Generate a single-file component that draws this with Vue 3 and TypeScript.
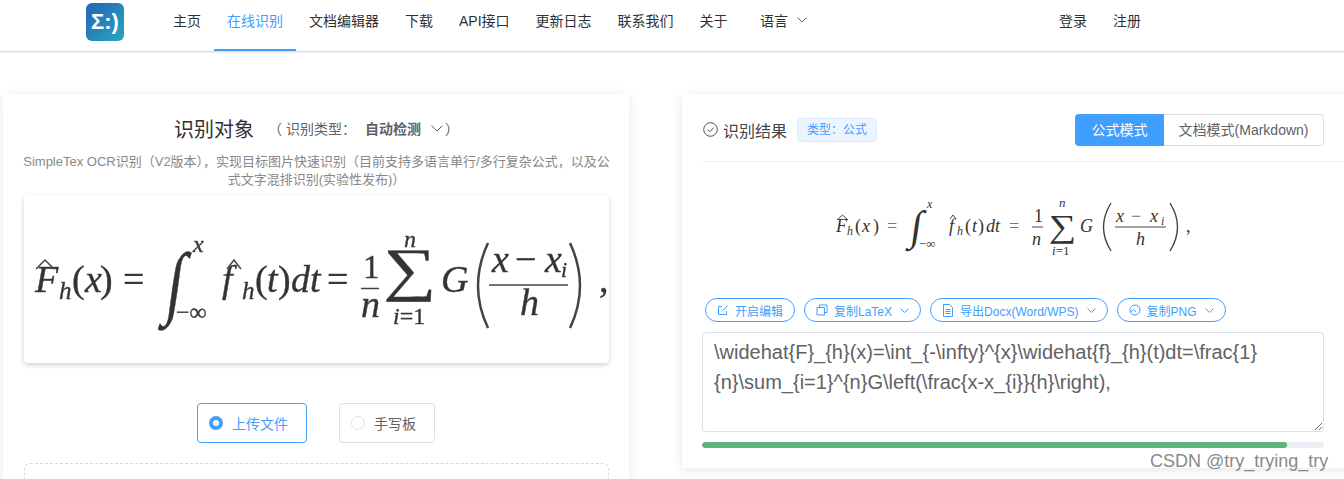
<script setup lang="ts">
const navItems = ['主页', '在线识别', '文档编辑器', '下载', 'API接口', '更新日志', '联系我们', '关于']
const latex = '\\widehat{F}_{h}(x)=\\int_{-\\infty}^{x}\\widehat{f}_{h}(t)dt=\\frac{1}{n}\\sum_{i=1}^{n}G\\left(\\frac{x-x_{i}}{h}\\right),'
</script>

<template>
  <div class="page">
    <header class="topbar">
      <div class="logo">Σ:)</div>
      <nav class="nav">
        <a v-for="(item, i) in navItems" :key="item" class="nav-item" :class="{ active: i === 1 }">{{ item }}</a>
        <a class="nav-item lang">
          语言
          <svg class="chev" width="10" height="6" viewBox="0 0 10 6"><path d="M.5.5 5 5 9.500.5" /></svg>
        </a>
      </nav>
      <div class="auth">
        <a>登录</a>
        <a>注册</a>
      </div>
    </header>

    <main class="columns">
      <section class="card left">
        <div class="title-row">
          <span class="title">识别对象</span>
          <span class="type">（ 识别类型：</span>
          <b class="type-value">自动检测</b>
          <svg class="chev type-chev" width="12" height="7" viewBox="0 0 12 7"><path d="M.5.5 6 6 11.500.5" /></svg>
          <span class="type">）</span>
        </div>
        <p class="desc">SimpleTex OCR识别（V2版本），实现目标图片快速识别（目前支持多语言单行/多行复杂公式，以及公式文字混排识别(实验性发布)）</p>

        <div class="source">
          <svg class="source-formula" width="585" height="168" viewBox="24 195 585 168">
            <g class="big">
              <text x="35" y="292">F</text>
              <text x="59" y="299" font-size="25">h</text>
              <text x="72" y="292" class="up">(</text>
              <text x="85" y="292">x</text>
              <text x="100" y="292" class="up">)</text>
              <text x="123" y="292" class="up">=</text>
              <text x="193" y="252" font-size="24">x</text>
              <text x="176" y="320" font-size="24" class="up">−∞</text>
              <text x="222" y="292">f</text>
              <text x="242" y="299" font-size="25">h</text>
              <text x="255" y="292" class="up">(</text>
              <text x="267" y="292">t</text>
              <text x="278" y="292" class="up">)</text>
              <text x="291" y="292">dt</text>
              <text x="327" y="292" class="up">=</text>
              <text x="363" y="278" class="up" font-size="33">1</text>
              <text x="361" y="317">n</text>
              <text x="404" y="247" font-size="24">n</text>
              <text x="393" y="324" font-size="24"><tspan>i</tspan><tspan class="up">=1</tspan></text>
              <text x="441" y="292">G</text>
              <text x="492" y="272">x</text>
              <text x="515" y="272" class="up">−</text>
              <text x="545" y="272">x</text>
              <text x="561" y="277" font-size="22">i</text>
              <text x="520" y="315">h</text>
              <text x="599" y="292" class="up">,</text>
              <text class="up" font-size="76" transform="translate(164 309) skewX(-8) scale(.8 1.06)">∫</text>
              <text class="up" font-size="62" transform="translate(383 289) scale(1.2 .95)">∑</text>
            </g>
            <g class="lines">
              <path d="M36 269 45 260 54 269M227 269 234 260 241 269" />
              <path d="M361 288.500H379M489 285H568" stroke-width="1.500" />
              <path d="M488 243Q468 286 488 328M570 243Q590 286 570 328" stroke-width="2.500" />
            </g>
          </svg>
        </div>

        <div class="modes">
          <label class="mode on"><i class="radio"></i>上传文件</label>
          <label class="mode"><i class="radio"></i>手写板</label>
        </div>
        <div class="dropzone"></div>
      </section>

      <section class="card right">
        <div class="result-head">
          <svg width="15" height="15" viewBox="0 0 15 15" class="ok"><circle cx="7.500" cy="7.500" r="6.800" /><path d="M4.500 7.500 6.800 9.800 10.800 5.500" /></svg>
          <span class="result-title">识别结果</span>
          <span class="tag">类型：公式</span>
          <div class="switch">
            <span class="switch-btn on">公式模式</span>
            <span class="switch-btn">文档模式(Markdown)</span>
          </div>
        </div>

        <div class="rendered">
          <svg width="380" height="70" viewBox="826 192 380 70">
            <g class="small">
              <text x="836" y="232">F</text>
              <text x="847" y="235" font-size="12">h</text>
              <text x="855" y="232" class="up">(</text>
              <text x="862" y="232">x</text>
              <text x="873" y="232" class="up">)</text>
              <text x="887" y="232" class="up soft">=</text>
              <text x="927" y="208" font-size="12">x</text>
              <text x="919" y="248" font-size="13" class="up">−∞</text>
              <text x="949" y="232">f</text>
              <text x="957" y="235" font-size="12">h</text>
              <text x="965" y="232" class="up">(</text>
              <text x="972" y="232">t</text>
              <text x="978" y="232" class="up">)</text>
              <text x="986" y="232">dt</text>
              <text x="1009" y="232" class="up soft">=</text>
              <text x="1034" y="222" class="up">1</text>
              <text x="1032" y="245">n</text>
              <text x="1059" y="207" font-size="13">n</text>
              <text x="1052" y="255" font-size="13"><tspan>i</tspan><tspan class="up">=1</tspan></text>
              <text x="1080" y="232">G</text>
              <text x="1116" y="222">x</text>
              <text x="1131" y="222" class="up soft">−</text>
              <text x="1150" y="222">x</text>
              <text x="1161" y="225" font-size="12">i</text>
              <text x="1136" y="245">h</text>
              <text x="1186" y="232" class="up">,</text>
              <text class="up" font-size="42" transform="translate(909 240) skewX(-8)">∫</text>
              <text class="up" font-size="32" transform="translate(1049 237) scale(1.2 1)">∑</text>
            </g>
            <g class="lines thin">
              <path d="M837 220 842.500 215 848 220M950 219 953 215 956 219" />
              <path d="M1032 227H1043M1115 227H1166" />
              <path d="M1111 203Q1096 227 1111 251M1170 203Q1185 227 1170 251" stroke-width="1.400" />
            </g>
          </svg>
        </div>

        <div class="actions">
          <button class="pill">
            <svg width="12" height="12" viewBox="0 0 12 12"><path d="M9.500 7v3.500h-8v-8H5M5 7.500 10.500 1.500" /></svg>
            开启编辑
          </button>
          <button class="pill">
            <svg width="12" height="12" viewBox="0 0 12 12"><path d="M3.500 3V1h7.500v7.500H8.500M1 3.500h7.500V11H1z" /></svg>
            复制LaTeX
            <svg class="chev" width="9" height="5" viewBox="0 0 9 5"><path d="M.5.500 4.500 4.500 8.500.5" /></svg>
          </button>
          <button class="pill">
            <svg width="12" height="13" viewBox="0 0 12 13"><path d="M1.500.5h6l3 3v9h-9zM3.500 5.500h5M3.500 7.500h5M3.500 9.500h5" /></svg>
            导出Docx(Word/WPS)
            <svg class="chev" width="9" height="5" viewBox="0 0 9 5"><path d="M.5.500 4.500 4.500 8.500.5" /></svg>
          </button>
          <button class="pill">
            <svg width="12" height="12" viewBox="0 0 12 12"><circle cx="6" cy="6" r="5" /><path d="M2 8 4.500 5.500 7 8M8 3.800h.5" /></svg>
            复制PNG
            <svg class="chev" width="9" height="5" viewBox="0 0 9 5"><path d="M.5.500 4.500 4.500 8.500.5" /></svg>
          </button>
        </div>

        <textarea class="latex" :value="latex" spellcheck="false"></textarea>

        <div class="progress"><div class="bar" :style="{ width: '94%' }"></div></div>
      </section>
    </main>

    <div class="watermark">CSDN @try_trying_try</div>
  </div>
</template>

<style>
html, body {
  margin: 0;
  overflow: hidden;
  background: #fff;
}
</style>

<style scoped>
.page {
  position: relative;
  height: 479px;
  overflow: hidden;
  font-family: "Liberation Sans", "Noto Sans CJK SC", sans-serif;
  color: #303133;
}

.topbar {
  display: flex;
  align-items: center;
  height: 51px;
  padding-left: 86px;
  border-bottom: 1px solid #dcdfe6;
  box-shadow: 0 1px 0 #f0f0f0;
}

.logo {
  width: 38px;
  height: 38px;
  margin-top: -7px;
  border-radius: 6px;
  background: linear-gradient(135deg, #2562b8, #2aa5bb);
  color: #fff;
  font-weight: 700;
  font-size: 22px;
  line-height: 38px;
  text-align: center;
}

.nav {
  display: flex;
  height: 100%;
  margin-left: 36px;
}

.nav-item {
  position: relative;
  display: flex;
  align-items: center;
  padding: 0 13px 11px;
  font-size: 14px;
  white-space: nowrap;
}

.nav-item.active {
  color: #409eff;
}

.nav-item.active::after {
  content: '';
  position: absolute;
  left: 0;
  right: 0;
  bottom: 0;
  height: 2px;
  background: #409eff;
}

.lang {
  margin-left: 6.500px;
  gap: 9px;
}

.chev {
  fill: none;
  stroke: #606266;
  stroke-width: 1;
}

.auth {
  display: flex;
  gap: 26px;
  margin-left: 239px;
  padding-bottom: 11px;
  font-size: 14px;
}

.columns {
  display: flex;
  align-items: flex-start;
  gap: 53px;
  padding: 42px 0 0 3px;
}

.card {
  background: #fff;
  box-shadow: 0 2px 12px rgba(0, 0, 0, 0.1);
  border-radius: 2px;
  box-sizing: border-box;
}

.left {
  flex: none;
  width: 626px;
  height: 420px;
  padding: 20px 20px 0 21px;
}

.title-row {
  display: flex;
  align-items: center;
  height: 28px;
  padding-left: 150px;
  font-size: 14px;
  color: #606266;
}

.title {
  font-size: 20px;
  margin-right: 14px;
  color: #303133;
}

.type-value {
  margin-left: 9px;
  margin-right: 10px;
}

.type-chev {
  margin-right: 2px;
}

.desc {
  margin: 11px -2px 0;
  font-size: 13px;
  line-height: 17.500px;
  color: #888;
  text-align: center;
}

.source {
  height: 168px;
  margin-top: 7px;
  background: #fff;
  border-radius: 4px;
  box-shadow: 0 2px 5px rgba(0, 0, 0, 0.18);
}

.source-formula {
  display: block;
  filter: blur(0.6px);
}

.big text,
.small text {
  font-family: "Liberation Serif", serif;
  font-style: italic;
  fill: #333;
}

.big text {
  stroke: #444;
  stroke-width: 0.4px;
}

.big {
  font-size: 38px;
}

.small {
  font-size: 18px;
}

.big .up,
.small .up,
.up {
  font-style: normal;
}

.small .soft {
  fill: #777;
}

.lines {
  fill: none;
  stroke: #444;
  stroke-width: 1.500;
}

.lines.thin {
  stroke-width: 1;
}

.modes {
  display: flex;
  justify-content: center;
  gap: 32px;
  margin-top: 40px;
  padding-right: 1px;
}

.mode {
  display: flex;
  align-items: center;
  gap: 9px;
  height: 40px;
  padding: 0 18px 0 11px;
  box-sizing: border-box;
  border: 1px solid #dcdfe6;
  border-radius: 4px;
  font-size: 14px;
  color: #606266;
}

.mode.on {
  border-color: #409eff;
  color: #409eff;
}

.radio {
  width: 14px;
  height: 14px;
  box-sizing: border-box;
  border: 1px solid #dcdfe6;
  border-radius: 50%;
}

.on .radio {
  border: 4.500px solid #409eff;
}

.dropzone {
  height: 80px;
  margin-top: 20px;
  border: 1px dashed #d9d9d9;
  border-radius: 6px;
}

.right {
  flex: none;
  width: 680px;
  height: 374px;
  padding: 20px 0 0 20px;
}

.result-head {
  display: flex;
  align-items: center;
  width: 642px;
  height: 48px;
  padding: 0 20px 16px 1px;
  border-bottom: 1px solid #ebeef5;
  box-sizing: border-box;
}

.ok {
  fill: none;
  stroke: #555;
  stroke-width: 1;
}

.result-title {
  margin-left: 5px;
  font-size: 16px;
  color: #444;
}

.tag {
  margin-left: 10px;
  padding: 0 9px;
  height: 24px;
  line-height: 22px;
  box-sizing: border-box;
  border: 1px solid #d9ecff;
  border-radius: 4px;
  background: #ecf5ff;
  color: #409eff;
  font-size: 12px;
}

.switch {
  display: flex;
  margin-left: auto;
  height: 32px;
  font-size: 14px;
}

.switch-btn {
  padding: 0 14.500px;
  line-height: 30px;
  border: 1px solid #dcdfe6;
  border-left: 0;
  border-radius: 0 4px 4px 0;
  color: #606266;
}

.switch-btn.on {
  padding: 0 16.500px;
  line-height: 32px;
  border: 0;
  border-radius: 4px 0 0 4px;
  background: #409eff;
  color: #fff;
}

.rendered {
  height: 70px;
  margin-top: 30px;
  padding-left: 124px;
}

.rendered svg {
  display: block;
}

.actions {
  display: flex;
  gap: 9px;
  margin-top: 36px;
  padding-left: 3px;
}

.pill {
  display: flex;
  align-items: center;
  gap: 6px;
  height: 24px;
  padding: 0 11px;
  background: #fff;
  border: 1px solid #409eff;
  border-radius: 12px;
  color: #409eff;
  font: 12px "Liberation Sans", "Noto Sans CJK SC", sans-serif;
  white-space: nowrap;
}

.pill svg {
  fill: none;
  stroke: #409eff;
  stroke-width: 1;
}

.pill .chev {
  margin-left: 2px;
}

.latex {
  display: block;
  width: 622px;
  height: 100px;
  margin-top: 10px;
  padding: 4px 11px;
  box-sizing: border-box;
  border: 1px solid #dcdfe6;
  border-radius: 4px;
  outline: none;
  font: 20px/30px "Liberation Sans", "Noto Sans CJK SC", sans-serif;
  color: #606266;
}

.progress {
  width: 622px;
  height: 6px;
  margin-top: 10px;
  border-radius: 3px;
  background: #ebeef5;
  overflow: hidden;
}

.bar {
  height: 100%;
  border-radius: 3px;
  background: #5cb57a;
}

.watermark {
  position: absolute;
  left: 1150px;
  top: 450px;
  font-size: 18px;
  line-height: 22px;
  color: #8a8a8a;
}
</style>
